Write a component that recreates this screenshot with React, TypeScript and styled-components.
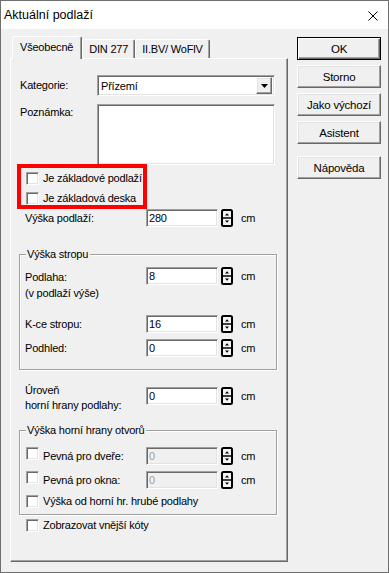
import styled, { createGlobalStyle, css } from 'styled-components';

const GlobalStyle = createGlobalStyle`
  html, body {
    margin: 0;
    padding: 0;
    background: #f0f0f0;
  }
  body {
    font-family: "Liberation Sans", Arial, sans-serif;
    font-size: 11px;
    letter-spacing: -0.2px;
    color: #000;
  }
`;

const raised = css`
  border: 1px solid;
  border-color: #fff #696969 #696969 #fff;
  box-shadow: inset -1px -1px 0 #a0a0a0, inset 1px 1px 0 #e3e3e3;
`;

const sunken = css`
  border: 1px solid;
  border-color: #a0a0a0 #fff #fff #a0a0a0;
  box-shadow: inset 1px 1px 0 #696969, inset -1px -1px 0 #e3e3e3;
`;

const Spinner = () => (
  <SpinBox width="12" height="18" viewBox="0 0 12 18">
    <rect x="1" y="1" width="10" height="16" rx="1.5" fill="#f4f4f4" stroke="#000" strokeWidth="2" />
    <line x1="1" y1="9" x2="11" y2="9" stroke="#000" strokeWidth="1.5" />
    <path d="M4 6.5h4L6 4.3z" fill="#000" />
    <path d="M4 11.5h4L6 13.7z" fill="#000" />
  </SpinBox>
);

const FieldControls = ({ value, disabled }: { value: string; disabled?: boolean }) => (
  <Controls>
    <NumInput readOnly disabled={disabled} value={value} />
    <Spinner />
    <Unit>cm</Unit>
  </Controls>
);

const App = () => {
  return (
    <>
      <GlobalStyle />
      <Window>
        <TitleBar>
          <Title>Aktuální podlaží</Title>
          <svg width="10" height="10" viewBox="0 0 10 10">
            <path d="M0.5 0.5L9.5 9.5M9.5 0.5L0.5 9.5" stroke="#000" strokeWidth="1" />
          </svg>
        </TitleBar>
        <Body>
          <TabArea>
            <TabStrip>
              <Tab $active>Všeobecně</Tab>
              <Tab>DIN 277</Tab>
              <Tab>II.BV/ WoFlV</Tab>
            </TabStrip>
            <Panel>
              <Row $top={16} $indent={1}>
                <FieldLabel $w={77} $lh={21}>Kategorie:</FieldLabel>
                <Combo>
                  <ComboText>Přízemí</ComboText>
                  <DropButton>
                    <svg width="7" height="4" viewBox="0 0 7 4">
                      <path d="M0 0h7L3.5 4z" fill="#000" />
                    </svg>
                  </DropButton>
                </Combo>
              </Row>
              <Row $top={8} $indent={1}>
                <FieldLabel $w={77} $lh={14} $pad={1}>Poznámka:</FieldLabel>
                <Memo />
              </Row>

              <Marked>
                <CheckRow $top={0}>
                  <CheckBox />
                  <CheckText>Je základové podlaží</CheckText>
                </CheckRow>
                <CheckRow $top={2}>
                  <CheckBox />
                  <CheckText>Je základová deska</CheckText>
                </CheckRow>
              </Marked>

              <Row $top={2} $indent={6}>
                <FieldLabel $w={121} $lh={18}>Výška podlaží:</FieldLabel>
                <FieldControls value="280" />
              </Row>

              <Group $top={27} $bottom={12}>
                <Legend>Výška stropu</Legend>
                <Row $top={12} $indent={5}>
                  <FieldLabel $w={121} $lh={16} $pad={2}>
                    Podlaha:
                    <br />
                    (v podlaží výše)
                  </FieldLabel>
                  <FieldControls value="8" />
                </Row>
                <Row $top={14} $indent={5}>
                  <FieldLabel $w={121} $lh={18}>K-ce stropu:</FieldLabel>
                  <FieldControls value="16" />
                </Row>
                <Row $top={6} $indent={5}>
                  <FieldLabel $w={121} $lh={18}>Podhled:</FieldLabel>
                  <FieldControls value="0" />
                </Row>
              </Group>

              <Row $top={13} $indent={6}>
                <FieldLabel $w={121} $lh={15}>
                  Úroveň
                  <br />
                  horní hrany podlahy:
                </FieldLabel>
                <ControlsOffset>
                  <FieldControls value="0" />
                </ControlsOffset>
              </Row>

              <Group $top={17} $bottom={4}>
                <Legend>Výška horní hrany otvorů</Legend>
                <OptRow $top={16}>
                  <CheckBox />
                  <OptLabel>Pevná pro dveře:</OptLabel>
                  <FieldControls value="0" disabled />
                </OptRow>
                <OptRow $top={6}>
                  <CheckBox />
                  <OptLabel>Pevná pro okna:</OptLabel>
                  <FieldControls value="0" disabled />
                </OptRow>
                <CheckRow $top={3} $indent={6}>
                  <CheckBox />
                  <CheckText>Výška od horní hr. hrubé podlahy</CheckText>
                </CheckRow>
              </Group>

              <CheckRow $top={1} $indent={7}>
                <CheckBox />
                <CheckText>Zobrazovat vnější kóty</CheckText>
              </CheckRow>
            </Panel>
          </TabArea>

          <ButtonColumn>
            <DialogButton $default>OK</DialogButton>
            <DialogButton>Storno</DialogButton>
            <DialogButton>Jako výchozí</DialogButton>
            <DialogButton>Asistent</DialogButton>
            <DialogButton $gap={12}>Nápověda</DialogButton>
          </ButtonColumn>
        </Body>
      </Window>
    </>
  );
};

export default App;

const Window = styled.div`
  width: 389px;
  height: 573px;
  box-sizing: border-box;
  border: 1px solid #6f6f6f;
  background: #f0f0f0;
  display: flex;
  flex-direction: column;
  overflow: hidden;
`;

const TitleBar = styled.div`
  height: 28px;
  flex-shrink: 0;
  background: #fff;
  display: flex;
  align-items: center;
  justify-content: space-between;
  padding: 0 10px 0 3px;

  svg {
    margin-top: 1px;
  }
`;

const Title = styled.div`
  font-size: 12.5px;
  letter-spacing: 0;
  color: #000;
`;

const Body = styled.div`
  display: flex;
  align-items: flex-start;
  padding: 7px 0 0 9px;
`;

const TabArea = styled.div`
  display: flex;
  flex-direction: column;
`;

const TabStrip = styled.div`
  height: 22px;
  display: flex;
  align-items: flex-end;
  padding-left: 2px;
`;

const Tab = styled.div<{ $active?: boolean }>`
  position: relative;
  box-sizing: border-box;
  height: ${(p) => (p.$active ? 23 : 19)}px;
  margin-bottom: ${(p) => (p.$active ? -1 : 0)}px;
  z-index: ${(p) => (p.$active ? 1 : 0)};
  padding: 0 ${(p) => (p.$active ? '8px 0 7px' : '6px')};
  padding-bottom: ${(p) => (p.$active ? 2 : 0)}px;
  display: flex;
  align-items: center;
  background: #f0f0f0;
  border-top: 1px solid #fff;
  border-left: 1px solid #fff;
  border-right: 1px solid #696969;
  border-radius: 2px 2px 0 0;
  box-shadow: inset -1px 0 0 #a0a0a0;
  white-space: nowrap;
`;

const Panel = styled.div`
  width: 278px;
  height: 504px;
  box-sizing: border-box;
  border: 1px solid;
  border-color: #fff #696969 #696969 #fff;
  box-shadow: inset -1px -1px 0 #a0a0a0;
  padding: 0 10px 0 8px;
  display: flex;
  flex-direction: column;
`;

const Row = styled.div<{ $top: number; $indent: number }>`
  display: flex;
  align-items: flex-start;
  margin-top: ${(p) => p.$top}px;
  padding-left: ${(p) => p.$indent}px;
`;

const FieldLabel = styled.div<{ $w: number; $lh: number; $pad?: number }>`
  width: ${(p) => p.$w}px;
  flex-shrink: 0;
  line-height: ${(p) => p.$lh}px;
  padding-top: ${(p) => p.$pad ?? 0}px;
  white-space: nowrap;
`;

const Combo = styled.div`
  width: 178px;
  height: 21px;
  box-sizing: border-box;
  ${sunken};
  background: #fff;
  display: flex;
  align-items: center;
  padding: 2px 2px 2px 3px;
`;

const ComboText = styled.div`
  flex: 1;
`;

const DropButton = styled.div`
  width: 16px;
  height: 17px;
  box-sizing: border-box;
  background: #f0f0f0;
  ${raised};
  display: flex;
  align-items: center;
  justify-content: center;
`;

const Memo = styled.div`
  width: 178px;
  height: 61px;
  box-sizing: border-box;
  ${sunken};
  background: #fff;
`;

const Marked = styled.div`
  position: relative;
  margin-top: 4px;

  &::after {
    content: '';
    position: absolute;
    top: -5px;
    left: -2px;
    width: 130px;
    height: 45px;
    box-sizing: border-box;
    border: 4px solid #ff0000;
    pointer-events: none;
  }
`;

const CheckRow = styled.div<{ $top: number; $indent?: number }>`
  display: flex;
  align-items: center;
  height: 18px;
  gap: 4px;
  margin-top: ${(p) => p.$top}px;
  padding-left: ${(p) => p.$indent ?? 7}px;
`;

const CheckBox = styled.div`
  width: 13px;
  height: 13px;
  flex-shrink: 0;
  box-sizing: border-box;
  ${sunken};
  background: #fff;
`;

const CheckText = styled.span`
  white-space: nowrap;
`;

const Controls = styled.div`
  display: flex;
  align-items: center;
`;

const ControlsOffset = styled.div`
  margin-top: 4px;
`;

const NumInput = styled.input`
  width: 72px;
  height: 18px;
  box-sizing: border-box;
  ${sunken};
  background: #fff;
  padding: 0 0 0 2px;
  margin: 0;
  font: inherit;
  letter-spacing: inherit;
  color: #000;
  outline: none;

  &:disabled {
    background: #f0f0f0;
    color: #a0a0a0;
    -webkit-text-fill-color: #a0a0a0;
    opacity: 1;
  }
`;

const SpinBox = styled.svg`
  margin-left: 3px;
  flex-shrink: 0;
`;

const Unit = styled.span`
  margin-left: 8px;
`;

const Group = styled.div<{ $top: number; $bottom: number }>`
  position: relative;
  margin-top: ${(p) => p.$top}px;
  padding-bottom: ${(p) => p.$bottom}px;
  border: 1px solid #a0a0a0;
  box-shadow: inset 1px 1px 0 #fff, 1px 1px 0 #fff;
`;

const Legend = styled.div`
  position: absolute;
  top: -8px;
  left: 6px;
  padding: 0 2px 0 1px;
  line-height: 14px;
  background: #f0f0f0;
  white-space: nowrap;
`;

const OptRow = styled.div<{ $top: number }>`
  display: flex;
  align-items: flex-start;
  margin-top: ${(p) => p.$top}px;
  padding-left: 6px;
`;

const OptLabel = styled.div`
  width: 103px;
  margin-left: 4px;
  line-height: 18px;
  white-space: nowrap;
`;

const ButtonColumn = styled.div`
  display: flex;
  flex-direction: column;
  margin: 1px 0 0 9px;
`;

const DialogButton = styled.div<{ $default?: boolean; $gap?: number }>`
  width: 84px;
  height: 23px;
  box-sizing: border-box;
  margin-top: ${(p) => p.$gap ?? 5}px;
  background: #f0f0f0;
  display: flex;
  align-items: center;
  justify-content: center;
  font-size: 11.5px;
  ${raised};

  &:first-child {
    margin-top: 0;
  }

  ${(p) =>
    p.$default &&
    css`
      border: 1px solid #000;
      box-shadow: inset 1px 1px 0 #fff, inset -1px -1px 0 #696969, inset -2px -2px 0 #a0a0a0;
    `}
`;
